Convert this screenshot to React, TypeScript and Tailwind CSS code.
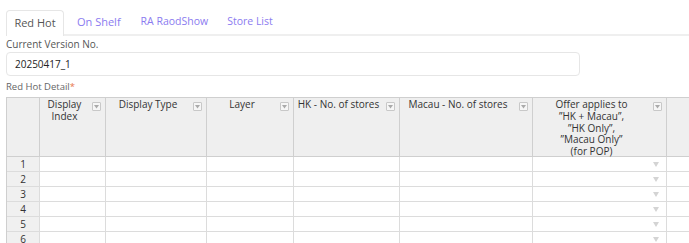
import React from "react";

const cols = [33, 66, 101, 87, 106, 133, 134, 60];

function FilterBtn() {
  return (
    <span className="absolute top-[4px] right-[4px] w-[9px] h-[9px] border border-[#c8c8c8] bg-[#f6f6f6] rounded-[1px] flex items-center justify-center">
      <svg width="5" height="4" viewBox="0 0 5 4"><path d="M0 0 L5 0 L2.5 3.5 Z" fill="#aaa" /></svg>
    </span>
  );
}

export default function App() {
  const headers: (string | string[])[] = [
    "",
    ["Display", "Index"],
    "Display Type",
    "Layer",
    "HK - No. of stores",
    "Macau - No. of stores",
    ["Offer applies to", "\u201dHK + Macau\u201d,", "\u201dHK Only\u201d,", "\u201dMacau Only\u201d", "(for POP)"],
    "",
  ];
  return (
    <div className="w-[689px] h-[243px] overflow-hidden bg-white text-[#444]" style={{ fontFamily: '"Open Sans", "Noto Sans", sans-serif' }}>
      <div className="pl-[6px] pt-[10px]">
        <div className="flex items-end border-b-2 border-[#efefef] h-[26px]">
          <div className="w-[58px] h-[26px] -mb-[2px] border border-b-0 border-[#e6e6e6] rounded-t-[4px] bg-white flex items-center justify-center text-[11px] text-[#555]">Red Hot</div>
          <div className="h-[24px] flex items-center text-[11px] text-[#8b7bf0] pl-[13px]">On Shelf</div>
          <div className="h-[24px] flex items-center text-[10.5px] text-[#8b7bf0] pl-[20px]">RA RaodShow</div>
          <div className="h-[24px] flex items-center text-[10.5px] text-[#8b7bf0] pl-[19px]">Store List</div>
        </div>
        <div className="text-[10px] text-[#555] leading-[16px]">Current Version No.</div>
        <div className="w-[574px] h-[24px] border border-[#e6e6e6] rounded-[4px] flex items-center pl-[8px] text-[10px] text-[#222]">20250417_1</div>
        <div className="text-[9.5px] text-[#666] leading-[16px] mt-[3px]">Red Hot Detail<span className="text-[#e8764a]">*</span></div>
        <div className="mt-[2px] border-l border-t border-[#cfcfcf] w-max">
          <div className="flex">
            {headers.map((h, i) => (
              <div key={i} className={`relative h-[59px] bg-[#efefef] border-r border-b border-[#cfcfcf] text-[10px] leading-[11.75px] text-[#333] text-center pt-[1px] ${i > 0 && i < 7 ? "pr-[16px]" : ""}`} style={{ width: cols[i] }}>
                {Array.isArray(h) ? h.map((l, j) => <div key={j}>{l}</div>) : h}
                {i > 0 && i < 7 && <FilterBtn />}
              </div>
            ))}
          </div>
          {[1, 2, 3, 4, 5, 6].map((r) => (
            <div key={r} className="flex">
              {cols.map((w, i) => (
                <div key={i} className={`relative h-[15px] border-r border-b border-[#dcdcdc] text-[10px] leading-[14px] text-center ${i === 0 ? "bg-[#f0f0f0] text-[#333] font-medium" : "bg-white"}`} style={{ width: w }}>
                  {i === 0 ? r : ""}
                  {i === 6 && (
                    <svg className="absolute right-[7px] top-[5px]" width="6" height="5" viewBox="0 0 6 5"><path d="M0 0 L6 0 L3 5 Z" fill="#d4d4d4" /></svg>
                  )}
                </div>
              ))}
            </div>
          ))}
        </div>
      </div>
    </div>
  );
}
